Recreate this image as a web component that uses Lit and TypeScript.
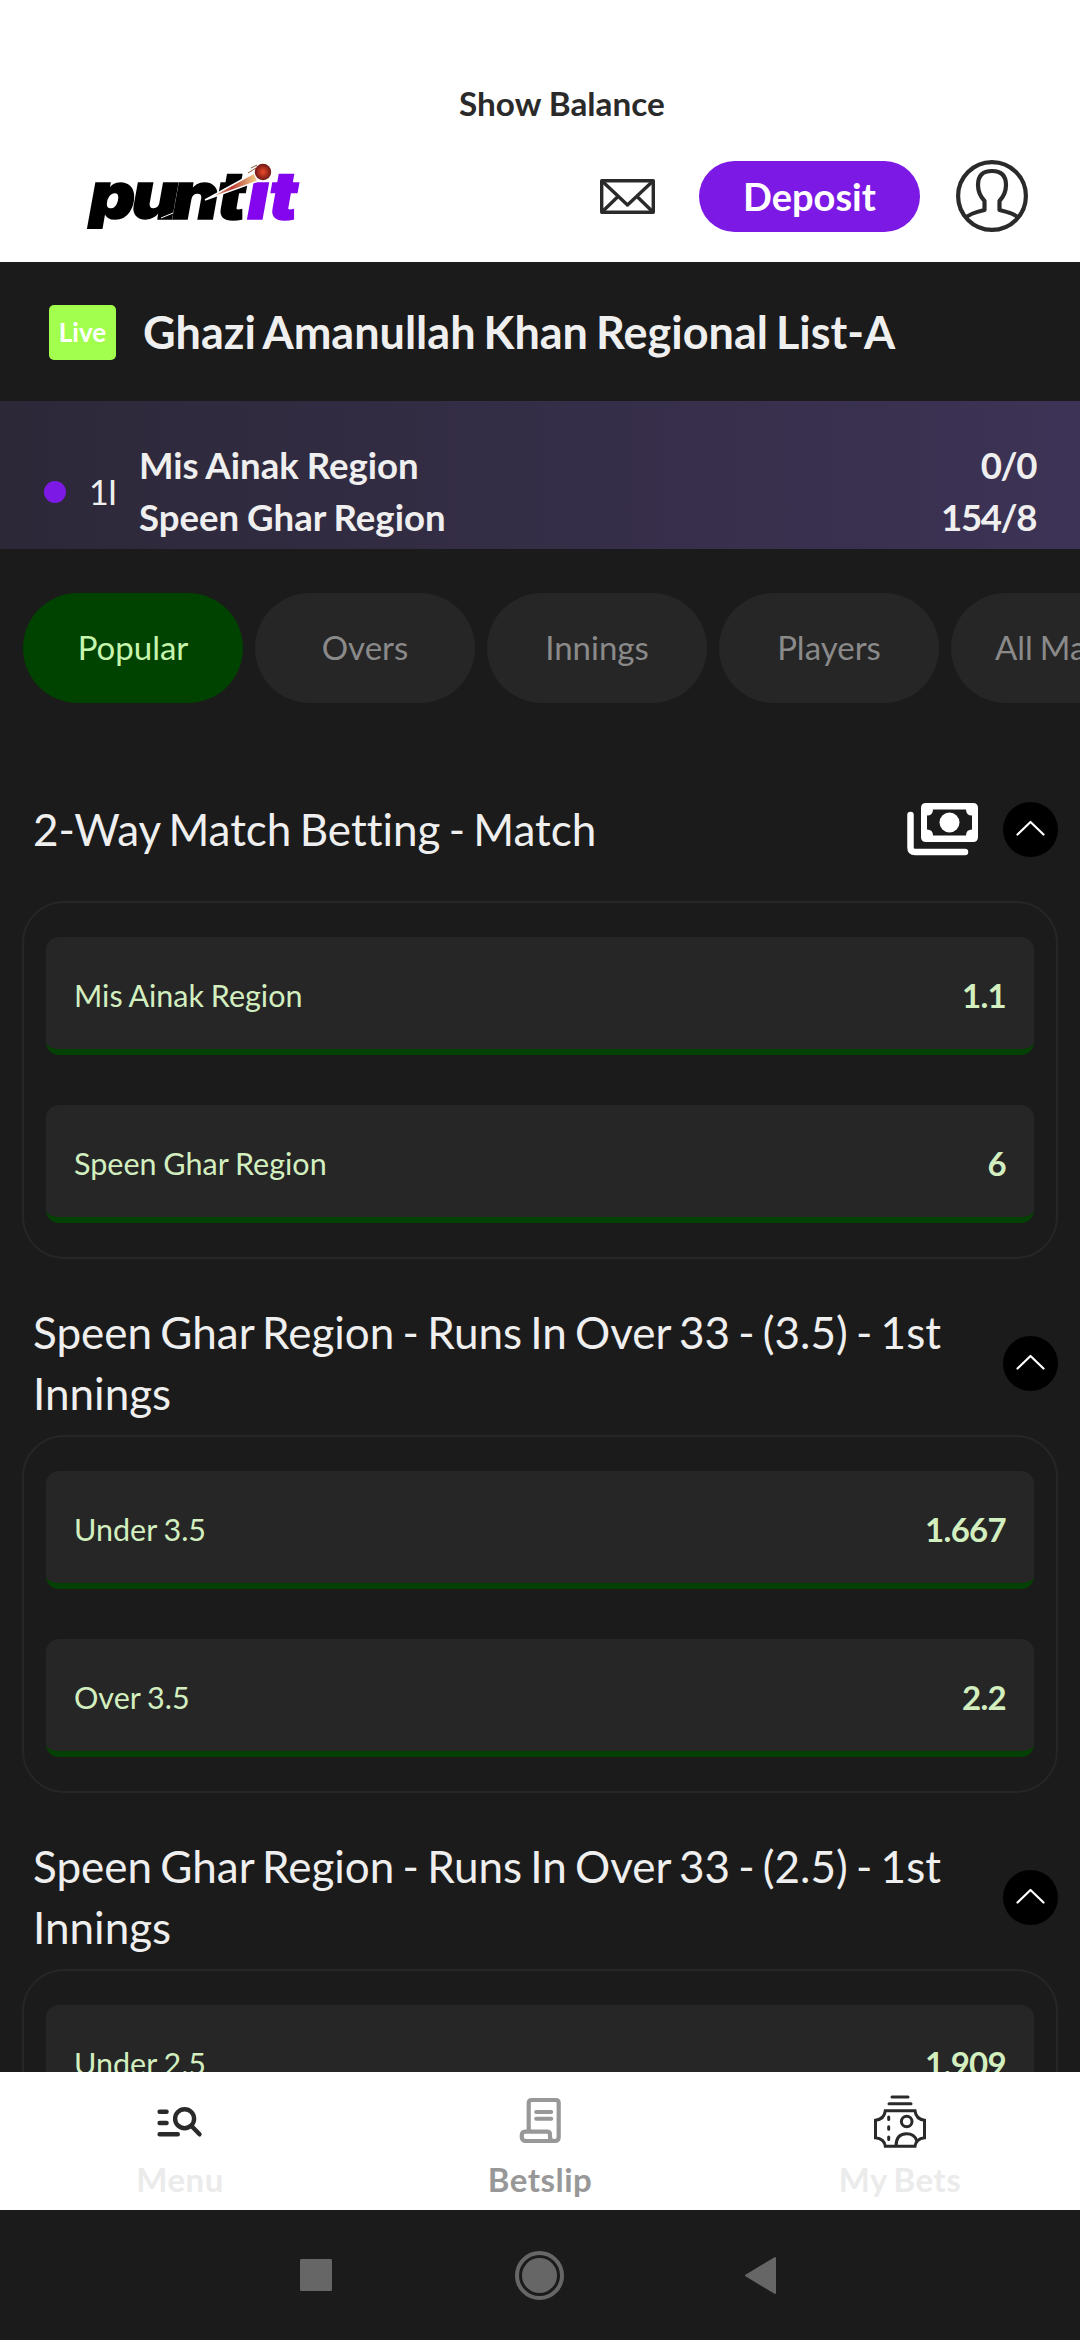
import { LitElement, html, css, svg } from "lit";
import { customElement, property } from "lit/decorators.js";
import { classMap } from "lit/directives/class-map.js";

interface Option { name: string; odds: string; }
interface Market { title: string; cash?: boolean; options: Option[]; }

const TABS = ["Popular", "Overs", "Innings", "Players", "All Markets"];

const MARKETS: Market[] = [
  {
    title: "2-Way Match Betting - Match",
    cash: true,
    options: [{ name: "Mis Ainak Region", odds: "1.1" }, { name: "Speen Ghar Region", odds: "6" }],
  },
  {
    title: "Speen Ghar Region - Runs In Over 33 - (3.5) - 1st Innings",
    options: [{ name: "Under 3.5", odds: "1.667" }, { name: "Over 3.5", odds: "2.2" }],
  },
  {
    title: "Speen Ghar Region - Runs In Over 33 - (2.5) - 1st Innings",
    options: [{ name: "Under 2.5", odds: "1.909" }],
  },
];

const menuIcon = svg`<g fill="none" stroke="#2a2a2a" stroke-width="4.4" stroke-linecap="round">
  <path d="M9.600 19.700h7M9.600 31h7M9.600 42.300h18.200"/><circle cx="34.600" cy="26.700" r="9.500"/><path d="M42 34.500l7.500 7.800"/></g>`;

const slipIcon = svg`<g fill="none" stroke="#989898" stroke-width="4.2" stroke-linejoin="round" stroke-linecap="round">
  <path d="M18.700 39V11q0-3 3-3h24q3 0 3 3v34q0 4-4 4H16q-4.300 0-4.300-4.800 0-4.500 3.300-4.500h22q3 0 3 3v2.300q0 4 4 4"/>
  <path d="M26.200 20h15M26.200 26.700h15" stroke-width="4"/></g>`;

const betsIcon = svg`<g fill="none" stroke="#2a2a2a" stroke-width="3">
  <path stroke-linecap="round" d="M22 5h16M19 11.700h22"/>
  <path d="M15.300 18.800h29.700q1 8.500 9.500 9.500v17.500q-8.500 1-9.500 8.500H15.300q-1-7.500-9.800-8.500V28.300q8.800-1 9.800-9.500z"/>
  <path stroke-linecap="round" d="M18.700 25v2.500M18.700 34.800v2.500M18.700 45v2.500"/>
  <circle cx="36.700" cy="29.500" r="5.300"/><path d="M26 54.300q0-12.500 10.500-12.500 8 0 10.200 7"/></g>`;

@customElement("market-card")
class MarketCard extends LitElement {
  @property({ attribute: false }) market!: Market;

  static styles = css`
    :host { display: block; }
    .head { display: flex; align-items: center; height: 122px; padding: 0 0 0 11px; }
    .title { flex: 1; margin: 0; font-size: 44px; line-height: 61px; font-weight: 400; color: #efefef; word-spacing: -3px; }
    .cash { width: 72px; height: 54px; margin-right: 24px; }
    .toggle { width: 55px; height: 55px; flex: none; border-radius: 50%; background: #000; }
    .gap { width: 30px; flex: none; }
    .box { margin-top: 11px; border: 2px solid #262626; border-radius: 42px; padding: 34px 22px;
      display: flex; flex-direction: column; gap: 50px; }
    .option { height: 118px; box-sizing: border-box; border-bottom: 6px solid #044104; border-radius: 13px;
      background: #262626; color: #d3efc0; display: flex; align-items: center; justify-content: space-between; padding: 4px 28px 0 28px; }
    .name { font-size: 30.5px; word-spacing: -1px; }
    .odds { font-size: 33px; font-weight: 700; letter-spacing: -0.7px; }
  `;

  render() {
    const m = this.market;
    return html`
      <div class="head">
        <h2 class="title">${m.title}</h2>
        ${m.cash
          ? html`<svg class="cash" viewBox="0 0 72 54">
              <path d="M3.500 13v32.500q0 4.500 4.500 4.500h50" fill="none" stroke="#fff" stroke-width="6.500" stroke-linecap="round"/>
              <path fill="#fff" fill-rule="evenodd" d="M19 1h47q5 0 5 5v29q0 5-5 5H19q-5 0-5-5V6q0-5 5-5zM26 7.500q0 6-6 6v14q6 0 6 6h33q0-6 6-6v-14q-6 0-6-6z"/>
              <circle cx="42.500" cy="20.500" r="10" fill="#fff"/>
            </svg>`
          : html`<span class="gap"></span>`}
        <svg class="toggle" viewBox="0 0 55 55">
          <path d="M14.500 32.500L27.500 20l13 12.500" fill="none" stroke="#fff" stroke-width="2.200" stroke-linecap="round" stroke-linejoin="round"/>
        </svg>
      </div>
      <div class="box">
        ${m.options.map((o) => html`<div class="option"><span class="name">${o.name}</span><span class="odds">${o.odds}</span></div>`)}
      </div>
    `;
  }
}

@customElement("app-root")
class AppRoot extends LitElement {
  static styles = css`
    :host { display: flex; flex-direction: column; width: 1080px; height: 2340px; overflow: hidden;
      background: #1b1b1b; font-family: Lato, "Liberation Sans", sans-serif; color: #efefef; font-variant-ligatures: none; }
    .top { height: 262px; flex: none; background: #fff; display: flex; flex-direction: column; }
    .balance { margin: 83px 0 0 459px; font-size: 33.3px; line-height: 40px; font-weight: 700; color: #2a2a2a; }
    .bar { margin-top: 37px; height: 72px; display: flex; align-items: center; padding: 0 52px 0 80px; }
    .logo { width: 240px; height: 90px; margin-right: auto; flex: none; }
    .mail { width: 55px; height: 35px; margin-right: 44px; }
    .deposit { width: 221px; height: 71px; border-radius: 36px; background: #7d19e4; color: #fff; font-size: 38px;
      font-weight: 700; display: flex; align-items: center; justify-content: center; margin-right: 36px; }
    .avatar { width: 72px; height: 72px; }
    .league { height: 139px; flex: none; display: flex; align-items: center; padding-left: 49px; gap: 27px; }
    .live { width: 67px; height: 55px; border-radius: 5px; background: #a2ff4e; color: #fff; font-size: 26px; font-weight: 700;
      display: flex; align-items: center; justify-content: center; margin-top: 1px; }
    .name { margin: 0; font-size: 45px; font-weight: 700; word-spacing: -2.9px; }
    .score { height: 148px; flex: none; box-sizing: border-box; padding: 38px 44px 0 44px; display: flex;
      background: linear-gradient(90deg, #2c2838, #3d3356); }
    .dot { width: 22px; height: 22px; border-radius: 50%; background: #7d19e4; margin-top: 42px; }
    .inn { font-size: 34px; line-height: 52px; margin: 27px 0 0 23px; width: 50px; letter-spacing: -1px; }
    .teams, .runs { font-size: 36.6px; line-height: 52px; font-weight: 700; }
    .teams { flex: 1; word-spacing: -1px; }
    .runs { text-align: right; letter-spacing: -1.4px; }
    .tabs { flex: none; display: flex; gap: 12px; padding: 44px 0 0 23px; overflow: hidden; }
    .tab { flex: none; box-sizing: border-box; min-width: 220px; height: 110px; padding: 0 44px 2px; border-radius: 55px; background: #262626;
      color: #8a8a8a; font-size: 33px; display: flex; align-items: center; justify-content: center; word-spacing: -1.5px; }
    .tab.on { background: #004300; color: #c8f5ae; }
    .markets { flex: 1; min-height: 0; overflow: hidden; padding: 65px 22px 0; display: flex; flex-direction: column; gap: 43px; }
    .foot { height: 138px; flex: none; background: #fff; display: grid; grid-template-columns: repeat(3, 1fr); }
    .item { display: flex; flex-direction: column; align-items: center; padding-top: 20px; font-size: 33px; line-height: 40px;
      font-weight: 700; color: #ebebeb; letter-spacing: 0.5px; word-spacing: -2px; }
    .item.on { color: #989898; }
    .item svg { width: 60px; height: 60px; margin-bottom: 7px; }
    .sys { height: 130px; flex: none; }
    .sys svg { display: block; }
    .word { font: italic 900 66px Inter, Lato, sans-serif; stroke-width: 1.5px; }
  `;

  render() {
    return html`
      <header class="top">
        <div class="balance">Show Balance</div>
        <div class="bar">
          <svg class="logo" viewBox="0 0 240 90">
            <defs>
              <radialGradient id="ball"><stop offset="0" stop-color="#ee4a2c"/><stop offset="1" stop-color="#6e1812"/></radialGradient>
              <linearGradient id="tail"><stop offset="0" stop-color="#f5e2a0"/><stop offset=".5" stop-color="#b83a34"/><stop offset="1" stop-color="#f6d78c"/></linearGradient>
              <clipPath id="crop"><path d="M0 0h240v78H0z"/></clipPath>
            </defs>
            <g clip-path="url(#crop)">
              <g transform="scale(1.08 1)">
                <text class="word" x="8.500 48 86 127" y="68" stroke="#000">punt</text>
                <text class="word" x="155 175" y="68" fill="#8306ee" stroke="#8306ee">ıt</text>
              </g>
            </g>
            <path d="M81 67l12-5" stroke="#fff" stroke-width="1"/>
            <path d="M171 17l6-3M168 22l8-5" stroke="#8a5a3c" stroke-width="1"/>
            <path d="M125 49L174 22l4 8z" fill="url(#tail)" stroke="#fff" stroke-width="1.500"/>
            <circle cx="183" cy="21" r="8.200" fill="url(#ball)"/>
          </svg>
          <svg class="mail" viewBox="0 0 55 35">
            <g fill="none" stroke="#2a2a2a" stroke-width="3.400" stroke-linejoin="round">
              <path d="M1.700 1.700h51.600v31.600H1.700z"/><path d="M2 2l25.500 24L53 2M2 33l16-15.500M53 33L37 17.500"/>
            </g>
          </svg>
          <div class="deposit">Deposit</div>
          <svg class="avatar" viewBox="0 0 72 72">
            <g fill="none" stroke="#2a2a2a" stroke-width="4.200">
              <circle cx="36" cy="36" r="33.900"/>
              <path stroke-linejoin="round" d="M10 58q2-4 18.500-8V41q-6.500-7-6.500-16 0-14 14-14t14 14q0 9-6.500 16v9q16.500 4 18.500 8"/>
            </g>
          </svg>
        </div>
      </header>
      <section class="league"><span class="live">Live</span><h1 class="name">Ghazi Amanullah Khan Regional List-A</h1></section>
      <section class="score">
        <span class="dot"></span><span class="inn">1I</span>
        <div class="teams"><div>Mis Ainak Region</div><div>Speen Ghar Region</div></div>
        <div class="runs"><div>0/0</div><div>154/8</div></div>
      </section>
      <nav class="tabs">${TABS.map((t, i) => html`<div class=${classMap({ tab: true, on: i === 0 })}>${t}</div>`)}</nav>
      <main class="markets">${MARKETS.map((m) => html`<market-card .market=${m}></market-card>`)}</main>
      <nav class="foot">
        <div class="item"><svg viewBox="0 0 60 60">${menuIcon}</svg>Menu</div>
        <div class="item on"><svg viewBox="0 0 60 60">${slipIcon}</svg>Betslip</div>
        <div class="item"><svg viewBox="0 0 60 60">${betsIcon}</svg>My Bets</div>
      </nav>
      <div class="sys">
        <svg width="1080" height="130" fill="#666">
          <rect x="300" y="49" width="32" height="32" rx="1.500"/>
          <circle cx="539.500" cy="65.500" r="17.500"/><circle cx="539.500" cy="65.500" r="22.500" fill="none" stroke="#666" stroke-width="4"/>
          <path d="M746 65.500L775 48v35z" stroke="#666" stroke-width="2" stroke-linejoin="round"/>
        </svg>
      </div>
    `;
  }
}
